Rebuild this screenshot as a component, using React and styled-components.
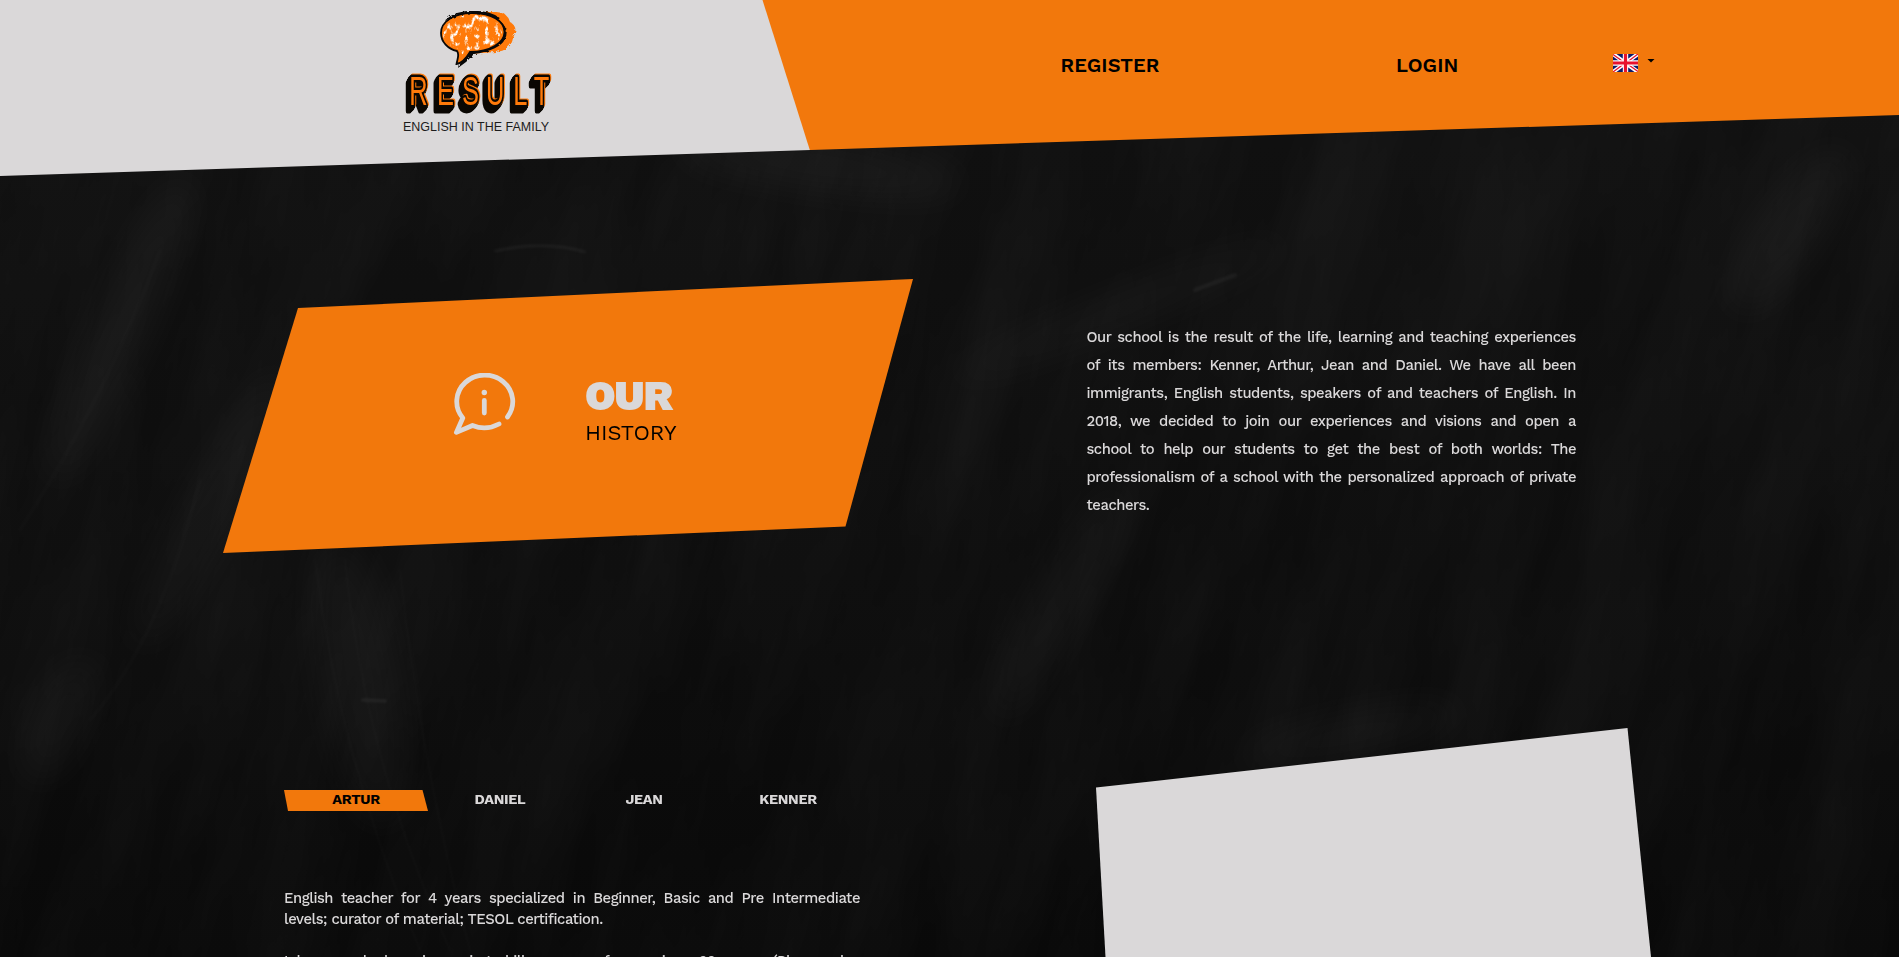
import React, { useState } from "react";
import styled, { createGlobalStyle } from "styled-components";

const ORANGE = "#f2780c";
const GREY = "#dad8d9";

const Global = createGlobalStyle`
  * { box-sizing: border-box; }
  body { margin: 0; background: #0f0f0f; overflow: hidden; }
  p { margin: 0; }
`;

const Page = styled.main`
  position: relative;
  height: 957px;
  overflow: hidden;
  color: ${GREY};
  font-family: "Work Sans", Inter, "Open Sans", sans-serif;
  isolation: isolate;
`;

const Board = styled.svg`
  position: absolute;
  inset: 0;
  z-index: -1;
`;

const Header = styled.header`
  display: flex;
  height: 176px;
  background: ${ORANGE};
  clip-path: polygon(0 0, 100% 0, 100% 115px, 0 176px);
`;

const Brand = styled.div`
  width: 818px;
  padding: 5px 0 0 395px;
  background: ${GREY};
  clip-path: polygon(0 0, 762.5px 0, 818px 176px, 0 176px);
`;

const LogoWord = styled.text`
  font: 400 41px "Liberation Sans", sans-serif;
  fill: #ff7a0a;
  stroke: #0a0703;
  stroke-width: 5px;
  stroke-linejoin: round;
  paint-order: stroke fill;
`;

const LogoWordGroup = styled.g`
  filter: drop-shadow(1px -1px 0 #ff7a0a) drop-shadow(-1px 2px 0 #0a0703)
    drop-shadow(-2px 2px 0 #0a0703) drop-shadow(-1px 2px 0 #0a0703);
`;

const LogoTagline = styled.text`
  font: 12.7px "Liberation Sans", Arial, sans-serif;
  fill: #1c1c1c;
`;

const Nav = styled.nav`
  display: flex;
  flex: 1;
  align-items: flex-start;
  padding: 53.5px 0 0 242.5px;
`;

const NavLink = styled.a`
  width: ${(p) => p.$w}px;
  color: #000;
  font-size: 20px;
  font-weight: 600;
  line-height: 23px;
  letter-spacing: ${(p) => p.$track}px;
`;

const Language = styled.div`
  display: flex;
  gap: 9px;
`;

const Caret = styled.span`
  margin-top: 5px;
  width: 8px;
  height: 4px;
  background: #000;
  clip-path: polygon(0 0, 100% 0, 50% 100%);
`;

const History = styled.section`
  display: flex;
  align-items: flex-start;
  padding: 103px 0 0 223px;
`;

const Banner = styled.div`
  display: flex;
  gap: 67px;
  width: 690px;
  height: 274px;
  padding: 93.5px 0 0 229px;
  background: ${ORANGE};
  clip-path: polygon(75px 29px, 100% 0, 622.5px 247.5px, 0 100%);
`;

const BannerTitle = styled.h1`
  margin: 0;
  padding: 3.5px 0 0 0;
  font-size: 42px;
  font-weight: 900;
  line-height: 40px;
  letter-spacing: -1px;
`;

const BannerSub = styled.span`
  display: block;
  color: #000;
  font-size: 22px;
  font-weight: 400;
  line-height: 34px;
  letter-spacing: -0.1px;
`;

const Story = styled.p`
  width: 489.5px;
  margin: 44px 0 0 173.5px;
  font-size: 14.8px;
  font-weight: 500;
  line-height: 28px;
  letter-spacing: -0.45px;
`;

const Line = styled.span`
  display: block;
  white-space: nowrap;
  text-align: justify;
  text-align-last: ${(p) => (p.$last ? "left" : "justify")};
`;

const Team = styled.section`
  display: flex;
  align-items: flex-start;
  padding: 175px 0 0 284px;
`;

const Bio = styled.div`
  width: 576px;
  padding-top: 62px;
`;

const Tabs = styled.div`
  display: flex;
  margin-bottom: 77px;
`;

const Tab = styled.button`
  width: 144px;
  height: 21px;
  padding: 0 0 2px;
  border: 0;
  font: 700 14.4px/19px "Work Sans", Inter, sans-serif;
  letter-spacing: -0.3px;
  color: ${(p) => (p.$on ? "#000" : GREY)};
  background: ${(p) => (p.$on ? ORANGE : "none")};
  clip-path: polygon(0 0, 138.5px 0, 100% 100%, 4px 100%);
`;

const BioText = styled.p`
  font-size: 14.8px;
  font-weight: 500;
  line-height: 21px;
  letter-spacing: -0.45px;
`;

const Gap = styled.span`
  display: block;
  height: 21px;
`;

const Portrait = styled.div`
  width: 555px;
  height: 229px;
  margin-left: 236px;
  background: ${GREY};
  clip-path: polygon(0 59.5px, 531.5px 0, 555px 100%, 9.5px 100%);
`;

const people = ["ARTUR", "DANIEL", "JEAN", "KENNER"];

const story = [
  "Our school is the result of the life, learning and teaching experiences",
  "of its members: Kenner, Arthur, Jean and Daniel. We have all been",
  "immigrants, English students, speakers of and teachers of English. In",
  "2018, we decided to join our experiences and visions and open a",
  "school to help our students to get the best of both worlds: The",
  "professionalism of a school with the personalized approach of private",
  "teachers.",
];

function Chalkboard() {
  return (
    <Board width="1899" height="957" viewBox="0 0 1899 957">
      <defs>
        <filter id="dust" x="0" y="0" width="100%" height="100%">
          <feTurbulence type="fractalNoise" baseFrequency="0.014 0.003" numOctaves="5" seed="8" />
          <feColorMatrix values="0 0 0 0 1  0 0 0 0 1  0 0 0 0 1  .055 0 0 0 -.016" />
        </filter>
        <filter id="soft" x="-100%" y="-100%" width="300%" height="300%">
          <feGaussianBlur stdDeviation="20" />
        </filter>
        <filter id="fine" x="-20%" y="-50%" width="140%" height="200%">
          <feGaussianBlur stdDeviation="1.6" />
        </filter>
        <linearGradient id="base" x1="0" y1="0" x2="0" y2="1">
          <stop offset="0" stopColor="#111111" />
          <stop offset=".6" stopColor="#0d0d0d" />
          <stop offset="1" stopColor="#090909" />
        </linearGradient>
      </defs>
      <rect width="1899" height="957" fill="url(#base)" />
      <g transform="rotate(14 950 478)">
        <rect x="-200" y="-300" width="2300" height="1600" filter="url(#dust)" />
      </g>
      <g fill="#fff" opacity=".04">
        <ellipse cx="120" cy="330" rx="28" ry="170" transform="rotate(24 120 330)" filter="url(#soft)" />
        <ellipse cx="210" cy="510" rx="25" ry="160" transform="rotate(28 210 510)" filter="url(#soft)" />
        <ellipse cx="360" cy="680" rx="40" ry="150" transform="rotate(-10 360 680)" filter="url(#soft)" />
        <ellipse cx="820" cy="165" rx="150" ry="25" transform="rotate(8 820 165)" filter="url(#soft)" />
        <ellipse cx="1120" cy="310" rx="190" ry="16" transform="rotate(-22 1120 310)" filter="url(#soft)" />
        <ellipse cx="1060" cy="600" rx="24" ry="140" transform="rotate(28 1060 600)" filter="url(#soft)" />
        <ellipse cx="1790" cy="230" rx="30" ry="100" transform="rotate(35 1790 230)" filter="url(#soft)" />
        <ellipse cx="60" cy="720" rx="26" ry="70" transform="rotate(25 60 720)" filter="url(#soft)" />
        <ellipse cx="1350" cy="735" rx="120" ry="20" transform="rotate(-12 1350 735)" filter="url(#soft)" />
      </g>
      <g fill="none" stroke="#fff" strokeLinecap="round" filter="url(#fine)">
        <path d="M495 251Q545 240 585 252" strokeWidth="2" opacity=".07" />
        <path d="M362 700L386 701" strokeWidth="2" opacity=".09" />
        <path d="M1195 290L1235 275" strokeWidth="4" opacity=".05" />
        <path d="M315 560Q340 760 420 950M345 560Q365 760 450 950M400 570Q420 760 470 950" strokeWidth="3" opacity=".016" />
        <path d="M160 250Q110 390 20 530M200 480Q160 640 90 720" strokeWidth="4" opacity=".016" />
      </g>
    </Board>
  );
}

function Logo() {
  return (
    <svg width="165" height="135" viewBox="395 5 165 135">
      <defs>
        <filter id="rough" x="-10%" y="-10%" width="120%" height="120%" colorInterpolationFilters="sRGB">
          <feTurbulence type="fractalNoise" baseFrequency=".3" numOctaves="2" seed="4" />
          <feDisplacementMap in="SourceGraphic" scale="4" />
        </filter>
        <filter id="grain" x="0" y="0" width="100%" height="100%">
          <feTurbulence type="fractalNoise" baseFrequency=".2 .13" numOctaves="4" seed="12" />
          <feColorMatrix values="0 0 0 0 1  0 0 0 0 1  0 0 0 0 1  5 0 0 0 -2.7" />
          <feComposite in2="SourceGraphic" operator="in" />
        </filter>
      </defs>
      <g filter="url(#rough)">
        <path d="M494 12Q507 11 510 22Q519 27 513 38Q511 51 495 52L470 54L475 12Z" fill="#ff7a0a" />
        <path d="M490 16Q512 25 505 39Q500 50 474 54Q467 62 458 68L462 50Z" fill="#080808" />
      </g>
      <path d="M472 13C453 13 441 22 441 33C441 42 448 49 457 51C460 55 457 60 456.500 64C463 63 467 57 470 52C490 52 504.500 43 504.500 32C504.500 21 492 13 472 13Z" fill="#ff7a0a" stroke="#080808" strokeWidth="1.8" />
      <path d="M472 15C454 15 443 23 443 33C443 42 449 47 459 49L461 55L469 50C489 50 502 42 502 32C502 23 491 15 472 15Z" fill="#fff" filter="url(#grain)" />
      <path d="M446 21Q455 12 474 12Q490 12 499 19" fill="none" stroke="#080808" strokeWidth="2.4" filter="url(#rough)" />
      <LogoWordGroup>
        <LogoWord transform="scale(.62 1)" x="660 705 745 784 828 861" y="105">
          RESULT
        </LogoWord>
      </LogoWordGroup>
      <LogoTagline x="403" y="131" textLength="146" lengthAdjust="spacingAndGlyphs">
        ENGLISH IN THE FAMILY
      </LogoTagline>
    </svg>
  );
}

function Flag() {
  return (
    <svg width="25" height="18" viewBox="0 0 25 18">
      <rect width="25" height="18" fill="#0a1a6b" />
      <path d="M0 0L25 18M25 0L0 18" stroke="#fff" strokeWidth="4" />
      <path d="M0 .5L12 9M25 17.5L13 9M25 0L13 9M0 18L12 9" stroke="#e8112d" strokeWidth="1.3" />
      <path d="M12.5 0V18M0 9H25" stroke="#fff" strokeWidth="5.4" />
      <path d="M12.5 0V18M0 9H25" stroke="#e8112d" strokeWidth="3.2" />
    </svg>
  );
}

function InfoBubble() {
  return (
    <svg width="66" height="66" viewBox="452 371 66 66" fill="none" stroke={GREY} strokeWidth="4.8" strokeLinecap="round" strokeLinejoin="round">
      <path d="M507.5 415A28 26.5 0 1 0 462.8 416L456.4 430.4L472.5 423.5Q486 429 499 422" />
      <path d="M484.3 398.5V411" />
      <circle cx="484.3" cy="390.5" r="2.7" fill={GREY} stroke="none" />
    </svg>
  );
}

export default function App() {
  const [active, setActive] = useState("ARTUR");
  return (
    <Page>
      <Global />
      <Chalkboard />
      <Header>
        <Brand>
          <Logo />
        </Brand>
        <Nav>
          <NavLink $w={335.5} $track={0.1}>REGISTER</NavLink>
          <NavLink $w={217} $track={0.1}>LOGIN</NavLink>
          <Language>
            <Flag />
            <Caret />
          </Language>
        </Nav>
      </Header>
      <History>
        <Banner>
          <InfoBubble />
          <BannerTitle>
            OUR
            <BannerSub>HISTORY</BannerSub>
          </BannerTitle>
        </Banner>
        <Story>
          {story.map((line, i) => (
            <Line key={line} $last={i === story.length - 1}>{line}</Line>
          ))}
        </Story>
      </History>
      <Team>
        <Bio>
          <Tabs>
            {people.map((name) => (
              <Tab key={name} $on={name === active} onClick={() => setActive(name)}>
                {name}
              </Tab>
            ))}
          </Tabs>
          <BioText>
            <Line>English teacher for 4 years specialized in Beginner, Basic and Pre Intermediate</Line>
            <Line $last>levels; curator of material; TESOL certification.</Line>
            <Gap />
            <Line>I have worked on improving skills as a professor since 20 years. (Phone, also</Line>
          </BioText>
        </Bio>
        <Portrait />
      </Team>
    </Page>
  );
}
